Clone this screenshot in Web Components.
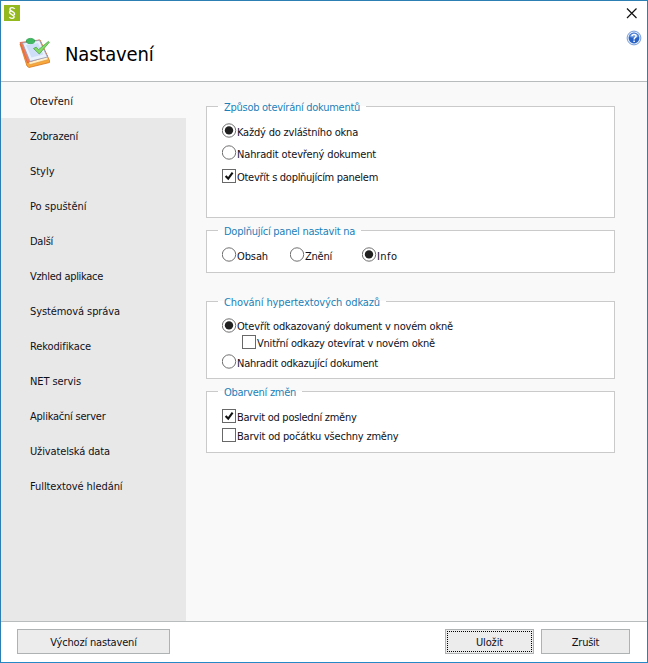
<!DOCTYPE html>
<html lang="cs">
<head>
<meta charset="utf-8">
<title>Nastavení</title>
<style>
html,body{margin:0;height:100%;overflow:hidden}
body{font:11px/15px "DejaVu Sans Condensed","DejaVu Sans",sans-serif;font-stretch:condensed;color:#101018}
</style>
</head>
<body>
<settings-window></settings-window>
<script>
// Single-line label whose tracking is adjusted to the width given in "w".
customElements.define('fit-text', class extends HTMLElement {
  connectedCallback() {
    if (this.shadowRoot) return;
    this.attachShadow({mode: 'open'}).innerHTML = `<style>:host{display:inline-block;white-space:pre}span{display:inline-block}</style><span><slot></slot></span>`;
    const span = this.shadowRoot.querySelector('span');
    const w = +this.getAttribute('w'), n = this.textContent.length;
    if (w) {
      this.style.width = w + 'px';
      span.style.letterSpacing = (w - span.getBoundingClientRect().width) / n + 'px';
    }
  }
});

customElements.define('nav-item', class extends HTMLElement {
  connectedCallback() {
    this.attachShadow({mode: 'open'}).innerHTML = `<style>
      :host{display:flex;align-items:center;height:35px;padding:2px 0 0 29px;box-sizing:border-box;background:#e8e8e8}
      :host([active]){background:#f9f9f9;height:36px;padding-top:3px}
    </style><slot></slot>`;
  }
});

customElements.define('option-item', class extends HTMLElement {
  connectedCallback() {
    const on = this.hasAttribute('checked');
    const radio = `<circle cx="7" cy="7.5" r="6.7" fill="#fff" stroke="#707070" stroke-width="1"/>${on ? '<circle cx="7" cy="7.4" r="4.2" fill="#202020"/>' : ''}`;
    const check = `<rect x=".5" y="1.5" width="13" height="13" fill="#fff" stroke="#686868"/>${on ? '<path d="M3.6 8L6.2 10.6L10.6 4.6" fill="none" stroke="#111" stroke-width="2.1"/>' : ''}`;
    this.attachShadow({mode: 'open'}).innerHTML = `<style>
      :host{display:flex;align-items:flex-start;height:15px}
      svg{flex:none;display:block}
      .t{padding-top:2px}
      :host([high]) .t{padding-top:1px}
    </style><svg width="15" height="15">${this.getAttribute('type') === 'radio' ? radio : check}</svg><div class="t"><slot></slot></div>`;
  }
});

customElements.define('group-box', class extends HTMLElement {
  connectedCallback() {
    this.attachShadow({mode: 'open'}).innerHTML = `<style>
      :host{display:block;box-sizing:border-box;border:1px solid #cacaca;background:#fff;width:409px}
      .legend{display:block;width:max-content;height:15px;box-sizing:border-box;margin:-8px 0 0 11px;padding:1px 6px 0 6px;color:#1b80b8;background:linear-gradient(#f9f9f9 7px,#fff 7px)}
      .body{padding-left:15px}
    </style><div class="legend"><slot name="legend"></slot></div><div class="body"><slot></slot></div>`;
  }
});

customElements.define('push-button', class extends HTMLElement {
  connectedCallback() {
    this.attachShadow({mode: 'open'}).innerHTML = `<style>
      :host{display:block;box-sizing:border-box;height:25px;border:1px solid #aeb2b2;background:#ececec;padding:1px}
      div{height:100%;box-sizing:border-box;display:flex;align-items:center;justify-content:center;border:1px dotted transparent;padding-top:1px}
      :host([focused]) div{border-color:#000}
    </style><div><slot></slot></div>`;
  }
});

customElements.define('settings-window', class extends HTMLElement {
  connectedCallback() {
    const nav = [['Otevření',43],['Zobrazení',48],['Styly',24.5],['Po spuštění',56.5],['Další',23],['Vzhled aplikace',73],['Systémová správa',90],['Rekodifikace',61],['NET servis',51],['Aplikační server',75.5],['Uživatelská data',80],['Fulltextové hledání',92.5]];
    this.attachShadow({mode: 'open'}).innerHTML = `<style>
      :host{display:grid;grid-template-rows:81px 1fr 41px;width:648px;height:663px;box-sizing:border-box;border:1px solid #2b7fb3;border-bottom-color:#2589c8;background:#fff}
      header{display:grid;grid-template-columns:1fr 24px;grid-template-rows:26px 1fr;border-bottom:1px solid #b9bcbc;box-sizing:border-box}
      header svg{display:block}
      .app{padding:4px 0 0 3px}
      .close{padding:6px 0 0 3px}
      .title{display:flex}
      .title svg{margin:9px 0 0 17px}
      h1{margin:13px 0 0 14px;font:400 20px/29px "DejaVu Sans Condensed","DejaVu Sans",sans-serif;font-stretch:condensed;color:#000}
      .help{padding:3px 0 0 3px}
      main{display:flex;min-height:0;background:#f9f9f9}
      nav{width:185px;background:#e8e8e8}
      .content{padding:24px 0 0 20px}
      footer{display:flex;border-top:1px solid #b9bcbc;padding:7px 17px 0 16px;gap:7px;box-sizing:border-box}
      .space{flex:1}
      .row{display:flex;margin-top:9px}
    </style>
    <header>
      <div class="app"><svg width="16" height="16"><rect width="16" height="16" fill="#93b91f"/><path d="M10.6 4C9.6 2.1 5.9 2.3 5.9 4.2C6 6.4 10.6 6.6 10.6 9C10.5 10 9.6 10.4 8.9 10.4M7.3 5.8C6.3 5.8 5.6 6.2 5.5 7.2C5.5 9.4 10.2 9.7 10.2 11.9C10 13.8 6.4 13.9 5.4 12" fill="none" stroke="#fff" stroke-width="1.4"/></svg></div>
      <div class="close"><svg width="12" height="12"><path d="M1 1.5L10.5 11M10.5 1.5L1 11" stroke="#111" stroke-width="1.2"/></svg></div>
      <div class="title">
        <svg width="33" height="33" viewBox="0 0 33 33">
          <path d="M2 8L22 4L31.5 24.5V26.5L11 31.5L9 30Z" fill="#f7a83a" stroke="#d8741c" stroke-width=".8"/>
          <path d="M3.5 9L22.5 5L30.4 23.5L11.5 28.7Z" fill="#fff0c8" stroke="#db8b35" stroke-width=".6"/>
          <path d="M2 6.5L21.5 4L29.5 20.5L11 26L9.5 27Z" fill="#f07a55" stroke="#dd5a40" stroke-width=".7"/>
          <path d="M4.5 7L21.5 4.3L29.5 21L12 25.4Z" fill="#e9f1fd" stroke="#8f9fbd" stroke-width=".8"/>
          <path d="M8 9L20 7L25.5 18.5L13.5 21.5Z" fill="#cfdef8"/>
          <ellipse cx="12.5" cy="5" rx="4.1" ry="2.6" fill="#3cba5d" stroke="#219643" stroke-width=".7"/>
          <path d="M9 5.5L16.4 5.2L16 7.3L10 8Z" fill="#43b866"/>
          <path d="M15.5 12.5L18.2 11.2L20.5 13.7L30.3 5.5L31.3 6.3L21.3 18Z" fill="#86dc62" stroke="#45a34a" stroke-width=".8"/>
        </svg>
        <h1><fit-text w="88.5">Nastavení</fit-text></h1>
      </div>
      <div class="help"><svg width="16" height="16" viewBox="0 0 16 16"><circle cx="8" cy="8" r="6.9" fill="#e0eafb" stroke="#6e96d4" stroke-width=".9"/><circle cx="8" cy="8" r="5.4" fill="#2862c4"/><path d="M3.3 7A4.8 4.8 0 0 1 12.7 7Q8 8.4 3.3 7Z" fill="#6796df"/><path d="M5.9 6.3C6 3.8 10.2 3.8 10.1 6.2C10 7.6 8.1 7.5 8.1 9.4M8.1 10.6V12.1" fill="none" stroke="#fff" stroke-width="1.5"/></svg></div>
    </header>
    <main>
      <nav>${nav.map(([t, w], i) => `<nav-item${i ? '' : ' active'}><fit-text w="${w}">${t}</fit-text></nav-item>`).join('')}</nav>
      <div class="content">
        <group-box style="height:112px">
          <fit-text slot="legend" w="136">Způsob otevírání dokumentů</fit-text>
          <option-item type="radio" checked style="margin-top:9px"><fit-text w="121">Každý do zvláštního okna</fit-text></option-item>
          <option-item type="radio" style="margin-top:7px"><fit-text w="139">Nahradit otevřený dokument</fit-text></option-item>
          <option-item type="check" checked style="margin-top:8px"><fit-text w="141">Otevřít s doplňujícím panelem</fit-text></option-item>
        </group-box>
        <group-box style="height:43px;margin-top:12px">
          <fit-text slot="legend" w="131">Doplňující panel nastavit na</fit-text>
          <div class="row">
            <option-item type="radio" style="width:68px"><fit-text w="31">Obsah</fit-text></option-item>
            <option-item type="radio" style="width:72px"><fit-text w="27">Znění</fit-text></option-item>
            <option-item type="radio" checked><fit-text w="20.5">Info</fit-text></option-item>
          </div>
        </group-box>
        <group-box style="height:78px;margin-top:28px">
          <fit-text slot="legend" w="156">Chování hypertextových odkazů</fit-text>
          <option-item type="radio" high checked style="margin-top:9px"><fit-text w="216">Otevřít odkazovaný dokument v novém okně</fit-text></option-item>
          <option-item type="check" style="margin:1px 0 0 20px"><fit-text w="178">Vnitřní odkazy otevírat v novém okně</fit-text></option-item>
          <option-item type="radio" style="margin-top:5px"><fit-text w="141">Nahradit odkazující dokument</fit-text></option-item>
        </group-box>
        <group-box style="height:62px;margin-top:12px">
          <fit-text slot="legend" w="72">Obarvení změn</fit-text>
          <option-item type="check" checked style="margin-top:9px"><fit-text w="119.5">Barvit od poslední změny</fit-text></option-item>
          <option-item type="check" style="margin-top:4px"><fit-text w="161.5">Barvit od počátku všechny změny</fit-text></option-item>
        </group-box>
      </div>
    </main>
    <footer>
      <push-button style="width:153px"><fit-text w="86.5">Výchozí nastavení</fit-text></push-button>
      <div class="space"></div>
      <push-button focused style="width:89px"><fit-text w="27">Uložit</fit-text></push-button>
      <push-button style="width:89px"><fit-text w="27.5">Zrušit</fit-text></push-button>
    </footer>`;
  }
});
</script>
</body>
</html>
